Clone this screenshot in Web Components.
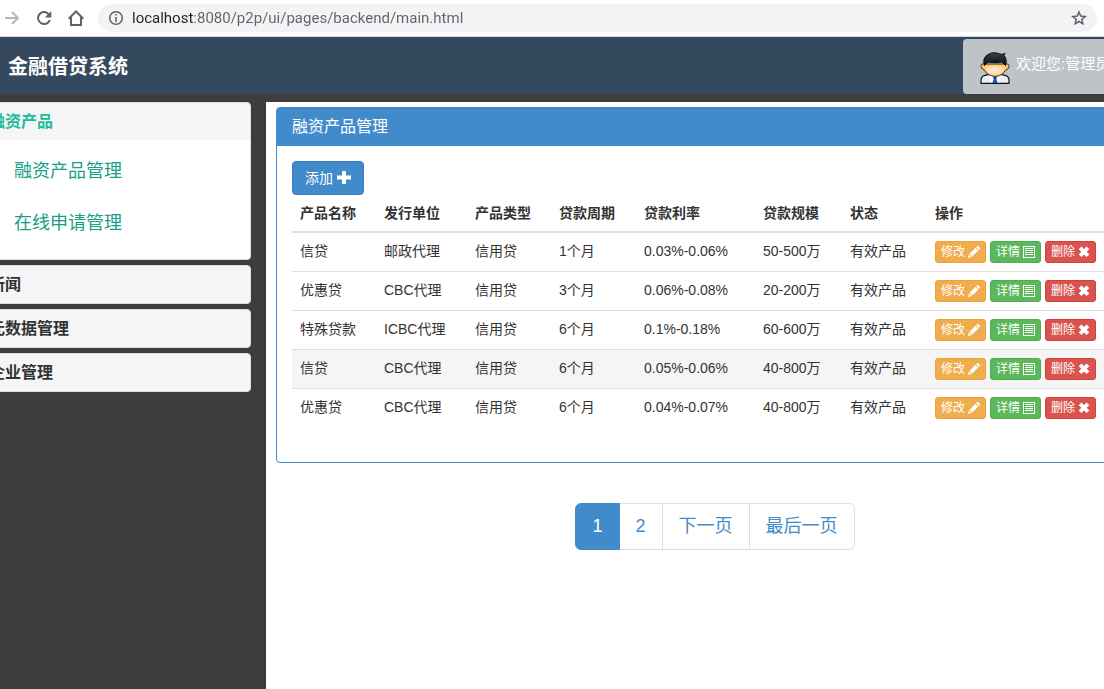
<!DOCTYPE html>
<html lang="zh-CN">
<head>
<meta charset="utf-8">
<title>金融借贷系统</title>
<style>
html, body { margin: 0; min-height: 100%; }
body { background: #3d3d3d; color: #333; font: 14px/20px "Liberation Sans", "Noto Sans CJK SC", sans-serif; overflow-x: hidden; }
</style>
</head>
<body>
<loan-app></loan-app>
<script>
const define = (name, html, init) => {
  const template = document.createElement('template');
  template.innerHTML = html;
  customElements.define(name, class extends HTMLElement {
    constructor() {
      super();
      this.attachShadow({ mode: 'open' }).append(template.content.cloneNode(true));
    }
    connectedCallback() { if (init) init(this, this.shadowRoot); }
  });
};

const ICONS = {
  forward: '<svg viewBox="0 0 16 16" fill="none" stroke="#b4b6b9" stroke-width="2"><path d="M1 8h13M8 2l6 6-6 6"/></svg>',
  reload: '<svg viewBox="0 0 16 16"><path d="M13.200 3.200A7 7 0 1 0 14.800 10h-2.100A5 5 0 1 1 11.700 4.600L9 7.500h6.300V1.200z" fill="#5f6368"/></svg>',
  home: '<svg viewBox="0 0 16 16" fill="none" stroke="#5f6368" stroke-width="2"><path d="M0.700 8.700L8 1.500l7.300 7.200M3 7.500V15h10V7.500"/></svg>',
  info: '<svg viewBox="0 0 16 16"><circle cx="8" cy="8" r="6.300" fill="none" stroke="#5f6368" stroke-width="1.500"/><path d="M7.200 4h1.600v1.600H7.200zM7.200 7h1.600v5H7.200z" fill="#5f6368"/></svg>',
  star: '<svg viewBox="0 0 16 16" fill="none" stroke="#5f6368" stroke-width="1.500"><path d="M8 2l1.700 4.100 4.500.4-3.400 2.900 1 4.400L8 11.500l-3.800 2.300 1-4.400L1.800 6.500l4.500-.4z"/></svg>',
  plus: '<svg viewBox="0 0 14 14" fill="#fff"><path d="M5 0h4v4.500h5v4H9V13H5V8.500H0v-4h5z"/></svg>',
  pencil: '<svg viewBox="0 0 12 12" fill="#fff"><path d="M0 12l1-3.800 2.800 2.800zM1.500 7.700l6-6 2.800 2.800-6 6zM8.100 1.100L9.100.200q.5-.5 1.100 0l1.600 1.600q.5.600 0 1.100l-.9 1z"/></svg>',
  list: '<svg viewBox="0 0 12 12" fill="#fff"><path fill-rule="evenodd" d="M0 0h12v12H0zM1 1v10h10V1z"/><path d="M2 2h8v1H2zM2 4h8v1H2zM2 6h8v1H2zM2 8h8v1H2z"/></svg>',
  remove: '<svg viewBox="0 0 12 12" fill="#fff"><path d="M3.500.5L6 3 8.500.5 11.300 3.200 8.700 5.800l2.600 2.600L8.500 11 6 8.500 3.500 11 .7 8.400l2.600-2.600L.7 3.200z"/></svg>'
};

define('ui-icon', `
<style>
:host { display: inline-flex; flex: none; width: 16px; height: 16px; }
svg { width: 100%; height: 100%; display: block; }
</style>`, (el, root) => {
  root.append(document.createRange().createContextualFragment(ICONS[el.getAttribute('name')]));
});

define('browser-bar', `
<style>
:host { display: flex; align-items: center; box-sizing: border-box; height: 37px; background: #fff; border-bottom: 1px solid #d5d7da; padding: 0 7px 0 4px; gap: 14px; }
button { border: 0; background: none; padding: 0; display: flex; }
.history { display: flex; gap: 16px; }
form { display: flex; flex: 1; align-items: center; gap: 8px; height: 28px; border-radius: 14px; background: #f1f3f4; padding: 0 10px; margin: 0; }
input { flex: 1; min-width: 0; border: 0; padding: 0; outline: 0; height: 24px; font: 15px/24px Roboto, sans-serif; color: #5f6368;
  background: linear-gradient(to right, #202124 61px, #5f6368 61px); -webkit-background-clip: text; background-clip: text; -webkit-text-fill-color: transparent; }
</style>
<div class="history">
<button aria-label="前进"><ui-icon name="forward"></ui-icon></button>
<button aria-label="重新加载"><ui-icon name="reload"></ui-icon></button>
<button aria-label="主页"><ui-icon name="home"></ui-icon></button>
</div>
<form><ui-icon name="info"></ui-icon><input type="text" aria-label="地址" value="localhost:8080/p2p/ui/pages/backend/main.html"><button type="button" aria-label="收藏"><ui-icon name="star"></ui-icon></button></form>`);

define('user-avatar', `
<style>:host { display: block; flex: none; width: 30px; height: 32px; } svg { display: block; width: 100%; height: 100%; }</style>
<svg viewBox="0 0 30 32">
<defs><radialGradient id="skin"><stop offset="0" stop-color="#fff0dc"/><stop offset=".5" stop-color="#ffe0b8"/><stop offset="1" stop-color="#ffbf5c"/></radialGradient>
<linearGradient id="hair" x2="0" y2="1"><stop offset="0" stop-color="#34434d"/><stop offset="1" stop-color="#080e13"/></linearGradient></defs>
<path d="M1 31.300v-3q0-4 4-5l6-1.500h8l6 1.500q4 1 4 5v3z" fill="#eceff2" stroke="#111" stroke-width="1.200"/>
<path d="M9 22l5 4.500L11 31zM21 22l-5 4.500 3 4.500z" fill="#fff"/>
<path d="M13 25h4l-.6 2.500L17.500 31h-5l1.100-3.500z" fill="#1552b5"/>
<path d="M4.500 12Q.5 11.500 1 14.500T5 18.500Q7 23.500 15 24.500q8-1 10-6 3.500-1 4-4T25.500 12z" fill="url(#skin)" stroke="#4b2b0c"/>
<path d="M4.500 13.500Q2 6 8 2.500q5-3.300 12-.5 1.500 1 5-.5l-1 2q3.500 3.500 1.500 10L22 10q-7 1.500-14 0z" fill="url(#hair)" stroke="#080e13"/>
</svg>`);

define('app-header', `
<style>
:host { display: flex; justify-content: space-between; align-items: flex-end; height: 57px; background: #34495e; }
h1 { margin: 0; padding: 2px 0 0 35px; align-self: center; color: #fff; font-size: 20px; line-height: 28px; }
a { display: flex; align-items: center; box-sizing: border-box; gap: 6px; width: 201px; height: 55px; padding: 3px 17px 0; border-radius: 4px; background: #bdc3c7; color: #fff; text-decoration: none; font-size: 15px; white-space: nowrap; }
span { padding-bottom: 8px; }
</style>
<h1>金融借贷系统</h1>
<a href="#user"><user-avatar></user-avatar><span>欢迎您:管理员</span></a>`);

define('menu-section', `
<style>
:host { display: block; background: #f5f5f5; border: 1px solid #ddd; border-radius: 4px; overflow: hidden; }
h2 { margin: 0; padding: 9px 15px 8px; font-size: 16px; line-height: 20px; }
a { color: inherit; text-decoration: none; }
:host([open]) h2 { color: #1abc9c; }
:host([open]) div { background: #fff; padding: 5px 40px 10px; }
</style>
<h2><a href="#"></a></h2><div><slot></slot></div>`, (el, root) => {
  root.querySelector('a').textContent = el.getAttribute('heading');
});

define('menu-link', `
<style>
:host { display: block; line-height: 52px; font-size: 18px; }
a { color: #16a085; text-decoration: none; }
</style>
<a href="#"><slot></slot></a>`);

define('side-menu', `
<style>:host { display: flex; flex-direction: column; gap: 5px; flex: none; box-sizing: border-box; width: 293px; padding-right: 15px; }</style>
<menu-section heading="融资产品" open><menu-link>融资产品管理</menu-link><menu-link>在线申请管理</menu-link></menu-section>
<menu-section heading="新闻"></menu-section>
<menu-section heading="元数据管理"></menu-section>
<menu-section heading="企业管理"></menu-section>`);

define('ui-button', `
<style>
:host { display: inline-flex; }
button { display: flex; align-items: center; gap: 4px; box-sizing: border-box; height: 34px; padding: 0 12px; border: 1px solid #357ebd; border-radius: 4px; background: #428bca; color: #fff; font: inherit; white-space: nowrap; }
ui-icon { width: 14px; height: 14px; }
:host([small]) button { height: 22px; padding: 0 5px; gap: 3px; font-size: 12px; border-radius: 3px; }
:host([small]) ui-icon { width: 12px; height: 12px; }
:host([kind=edit]) button { background: #f0ad4e; border-color: #eea236; }
:host([kind=detail]) button { background: #5cb85c; border-color: #4cae4c; }
:host([kind=delete]) button { background: #d9534f; border-color: #d43f3a; }
</style>
<button type="button"><slot></slot></button>`, (el, root) => {
  const icon = document.createElement('ui-icon');
  icon.setAttribute('name', el.getAttribute('icon'));
  root.querySelector('button').append(icon);
});

define('titled-panel', `
<style>
:host { display: block; background: #fff; border: 1px solid #428bca; border-radius: 4px; }
h2 { margin: 0; background: #428bca; color: #fff; font-size: 16px; font-weight: 400; line-height: 18px; padding: 10px 15px; }
div { padding: 15px 15px 35px; }
</style>
<h2></h2><div><slot></slot></div>`, (el, root) => {
  root.querySelector('h2').textContent = el.getAttribute('heading');
});

const PRODUCTS = [
  ['信贷', '邮政代理', '信用贷', '1个月', '0.03%-0.06%', '50-500万', '有效产品'],
  ['优惠贷', 'CBC代理', '信用贷', '3个月', '0.06%-0.08%', '20-200万', '有效产品'],
  ['特殊贷款', 'ICBC代理', '信用贷', '6个月', '0.1%-0.18%', '60-600万', '有效产品'],
  ['信贷', 'CBC代理', '信用贷', '6个月', '0.05%-0.06%', '40-800万', '有效产品'],
  ['优惠贷', 'CBC代理', '信用贷', '6个月', '0.04%-0.07%', '40-800万', '有效产品']
];

define('product-table', `
<style>
:host { display: block; }
table { width: 100%; border-collapse: separate; border-spacing: 0; table-layout: fixed; }
th, td { padding: 8px; text-align: left; vertical-align: top; white-space: nowrap; line-height: 20px; }
th { border-bottom: 2px solid #ddd; }
tr + tr td { border-top: 1px solid #ddd; }
tr.current td, tbody tr:hover td { background: #f5f5f5; }
.actions { display: flex; gap: 4px; }
</style>
<table>
<colgroup><col style="width:84px"><col style="width:91px"><col style="width:84px"><col style="width:85px"><col style="width:119px"><col style="width:87px"><col style="width:85px"><col></colgroup>
<thead><tr><th>产品名称</th><th>发行单位</th><th>产品类型</th><th>贷款周期</th><th>贷款利率</th><th>贷款规模</th><th>状态</th><th>操作</th></tr></thead>
<tbody></tbody>
</table>`, (el, root) => {
  root.querySelector('tbody').innerHTML = PRODUCTS.map((row, i) => `<tr${i === 3 ? ' class="current"' : ''}>${row.map(c => `<td>${c}</td>`).join('')}<td><div class="actions"><ui-button small kind="edit" icon="pencil">修改</ui-button><ui-button small kind="detail" icon="list">详情</ui-button><ui-button small kind="delete" icon="remove">删除</ui-button></div></td></tr>`).join('');
});

define('page-nav', `
<style>
:host { display: flex; justify-content: center; padding-top: 40px; }
nav { display: flex; font-size: 18px; line-height: 25px; }
a { color: #428bca; padding: 10px 16px; text-decoration: none; border: 1px solid #ddd; border-left: 0; }
a:first-child { background: #428bca; color: #fff; border: 1px solid #428bca; border-radius: 6px 0 0 6px; }
a:last-child { border-radius: 0 6px 6px 0; }
</style>
<nav aria-label="分页"><a href="#1" aria-current="page">1</a><a href="#2">2</a><a href="#next">下一页</a><a href="#last">最后一页</a></nav>`);

define('loan-app', `
<style>
:host { display: flex; flex-direction: column; min-height: 100vh; overflow: hidden; }
.page { display: flex; flex-direction: column; flex: 1; gap: 8px; margin: 0 -60px 0 -27px; }
.columns { display: flex; flex: 1; }
main { flex: 1; min-width: 0; background: #fff; padding: 5px 10px; }
</style>
<browser-bar></browser-bar>
<div class="page">
<app-header></app-header>
<div class="columns">
<side-menu></side-menu>
<main><titled-panel heading="融资产品管理"><ui-button icon="plus">添加</ui-button><product-table></product-table></titled-panel><page-nav></page-nav></main>
</div>
</div>`);
</script>
</body>
</html>
